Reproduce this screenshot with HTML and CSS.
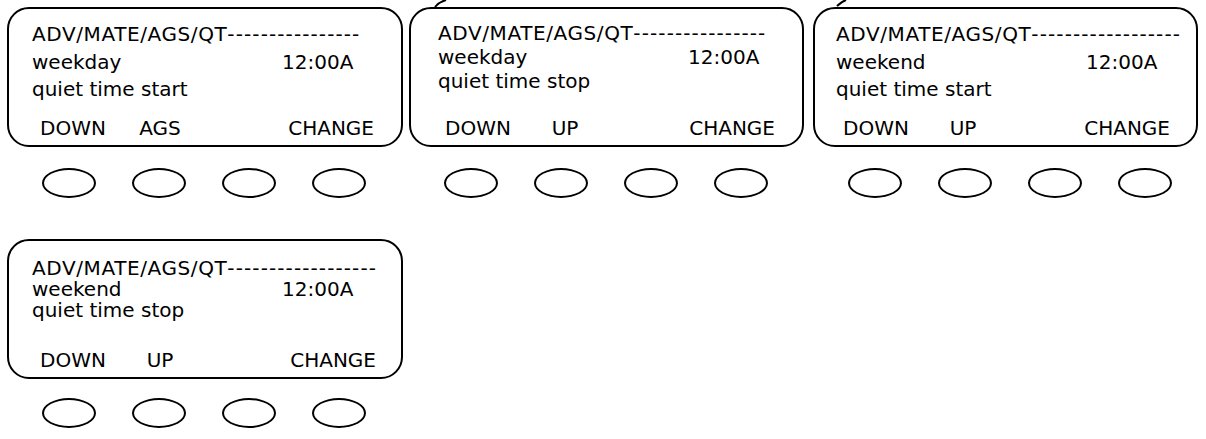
FILE: index.html
```html
<!DOCTYPE html>
<html lang="en">
<head>
    <meta charset="UTF-8">
    <title>AGS quiet time screens</title>
    <link rel="stylesheet" href="styles.css">
</head>
<body>

    <!-- pezzi di frecce che arrivano dall'alto -->
    <svg class="arrow-tip tip-1" width="14" height="8" viewBox="0 0 14 8"><path d="M1 7 Q5 2 12 0" fill="none" stroke="#000" stroke-width="2"/></svg>
    <svg class="arrow-tip tip-2" width="14" height="8" viewBox="0 0 14 8"><path d="M1 6 Q5 2 10 0" fill="none" stroke="#000" stroke-width="2"/></svg>

    <div class="sheet">

        <div class="unit p1">
            <div class="lcd">
                <div class="line head">ADV/MATE/AGS/QT<span class="dash">----------------</span></div>
                <div class="line split"><span>weekday</span><span>12:00A</span></div>
                <div class="line">quiet time start</div>
                <div class="keys"><span>DOWN</span><span class="mid">AGS</span><span></span><span>CHANGE</span></div>
            </div>
            <div class="buttons"><i></i><i></i><i></i><i></i></div>
        </div>

        <div class="unit p2">
            <div class="lcd tight">
                <div class="line head">ADV/MATE/AGS/QT<span class="dash">----------------</span></div>
                <div class="line split"><span>weekday</span><span>12:00A</span></div>
                <div class="line">quiet time stop</div>
                <div class="keys"><span>DOWN</span><span class="mid">UP</span><span></span><span>CHANGE</span></div>
            </div>
            <div class="buttons"><i></i><i></i><i></i><i></i></div>
        </div>

        <div class="unit p3">
            <div class="lcd">
                <div class="line head">ADV/MATE/AGS/QT<span class="dash">------------------</span></div>
                <div class="line split"><span>weekend</span><span>12:00A</span></div>
                <div class="line">quiet time start</div>
                <div class="keys"><span>DOWN</span><span class="mid">UP</span><span></span><span>CHANGE</span></div>
            </div>
            <div class="buttons"><i></i><i></i><i></i><i></i></div>
        </div>

        <div class="unit p4">
            <div class="lcd tighter">
                <div class="line head">ADV/MATE/AGS/QT<span class="dash">------------------</span></div>
                <div class="line split"><span>weekend</span><span>12:00A</span></div>
                <div class="line">quiet time stop</div>
                <div class="keys"><span>DOWN</span><span class="mid">UP</span><span></span><span>CHANGE</span></div>
            </div>
            <div class="buttons"><i></i><i></i><i></i><i></i></div>
        </div>

    </div>

</body>
</html>
```

FILE: styles.css
```css
body {
    margin: 0;
    background-color: #fff;
    color: #000;
    font-family: "DejaVu Sans", Verdana, sans-serif;
    font-size: 20px;
}

.sheet {
    display: grid;
    grid-template-columns: 396px 395px 388px;
    column-gap: 6px;
    row-gap: 41px;
    padding: 7px 0 0 7px;
}

.p3 {
    margin-left: 3px;
}

/* display a cristalli liquidi */
.lcd {
    height: 140px;
    box-sizing: border-box;
    border: 2px solid #000;
    border-radius: 22px;
    padding: 12px 0 5px 0;
    display: flex;
    flex-direction: column;
    line-height: 27.5px;
}

.lcd.tight {
    line-height: 24px;
    padding-top: 12px;
}

.lcd.tighter {
    line-height: 21px;
    padding-top: 17px;
}

.line {
    white-space: nowrap;
    padding-left: 23px;
}

.p2 .line {
    padding-left: 27px;
}

.p3 .line {
    padding-left: 21px;
}

.head {
    letter-spacing: 0.6px;
}

.dash {
    letter-spacing: 1.1px;
}

.split {
    display: grid;
    grid-template-columns: 250px auto;
}

/* etichette dei tasti funzione */
.keys {
    margin-top: auto;
    display: grid;
    grid-template-columns: 90px 60px 1fr auto;
    padding: 0 27px 0 31px;
    line-height: 24px;
}

.keys .mid {
    text-align: center;
}

.p2 .keys {
    padding-left: 34px;
}

.p3 .keys {
    padding-left: 28px;
    padding-right: 26px;
}

.p4 .keys {
    padding-right: 25px;
}

/* tasti ovali sotto il display */
.buttons {
    display: flex;
    gap: 36px;
    padding: 21px 0 0 35px;
}

.buttons i {
    width: 54px;
    height: 30px;
    box-sizing: border-box;
    border: 2px solid #000;
    border-radius: 50%;
}

.p4 .buttons {
    padding-top: 19px;
}

.arrow-tip {
    position: absolute;
    top: 0;
}

.tip-1 {
    left: 434px;
}

.tip-2 {
    left: 836px;
}
```
